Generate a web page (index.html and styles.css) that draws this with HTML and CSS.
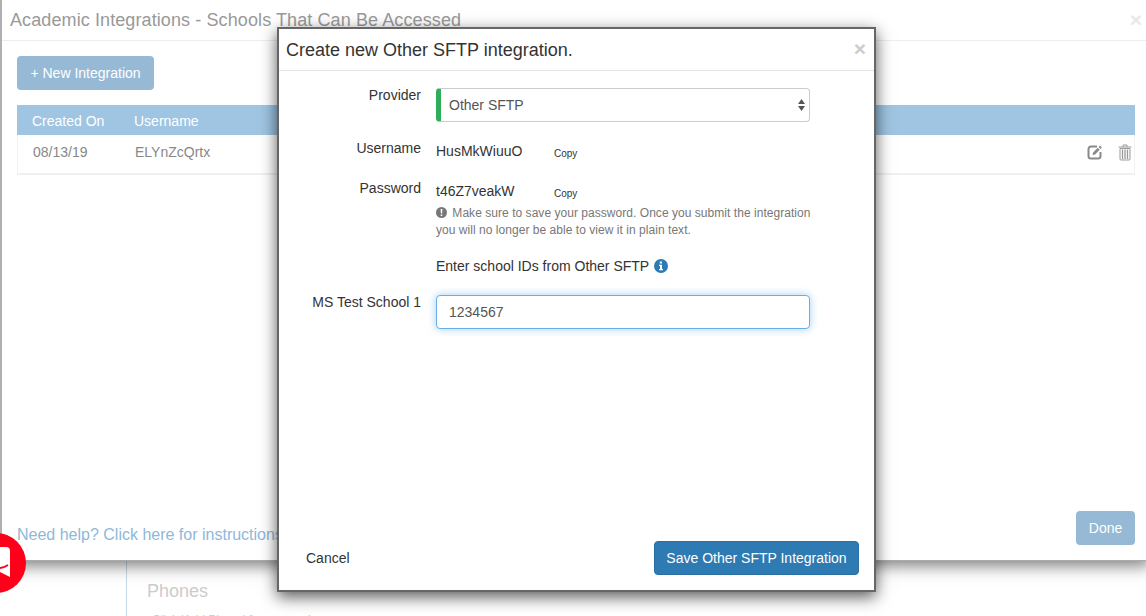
FILE: index.html
```html
<!doctype html>
<html lang="en">
<head>
	<meta charset="UTF-8">
	<title>Academic Integrations</title>
	<link rel="stylesheet" href="styles.css">
</head>
<body>
	<!-- page behind the modals -->
	<div id="page">
		<div class="phones">
			<h3>Phones</h3>
			<p>Click 'Add Phone' for a new phone</p>
		</div>
	</div>

	<!-- first modal -->
	<div id="outer">
		<div class="outer-head">
			<span class="outer-title">Academic Integrations - Schools That Can Be Accessed</span>
			<span class="close outer-close">&times;</span>
		</div>
		<div class="outer-body">
			<button class="btn faded new-btn">+ New Integration</button>
			<div class="table-head">
				<span class="col-date">Created On</span>
				<span>Username</span>
			</div>
			<div class="table-row">
				<span class="col-date">08/13/19</span>
				<span class="col-user">ELYnZcQrtx</span>
				<span class="row-icons">
					<svg width="16" height="16" viewBox="0 0 16 16"><path d="M10 2.500H4A2.500 2.500 0 0 0 1.500 5v7A2.500 2.500 0 0 0 4 14.500h7a2.500 2.500 0 0 0 2.500-2.500V8" fill="none" stroke="#8a8a8a" stroke-width="2"/><path d="M5.500 11l.6-2.600 4.600-4.600 2 2-4.600 4.600zM11.600 2.900 12.900 1.600l2 2-1.300 1.300z" fill="#8a8a8a"/></svg>
					<svg width="14" height="17" viewBox="0 0 14 17"><path d="M0.500 3h13M5 3V1h4v2" fill="none" stroke="#999" stroke-width="1"/><path d="M2 4.500h10V15a1 1 0 0 1-1 1H3a1 1 0 0 1-1-1z" fill="none" stroke="#999" stroke-width="1"/><path d="M4.500 5.500v9.500M7 5.500v9.500M9.500 5.500v9.500" stroke="#999" stroke-width="1.300"/></svg>
				</span>
			</div>
		</div>
		<div class="outer-foot">
			<a class="help">Need help? Click here for instructions</a>
			<button class="btn faded done-btn">Done</button>
		</div>
	</div>

	<!-- chat bubble -->
	<div id="bubble">
		<svg width="26" height="60" viewBox="0 0 26 60"><path d="M-6 14h12a4 4 0 0 1 4 4v26l-10-5h-6z" fill="#fff"/><path d="M-4 35q6 1 12-3" fill="none" stroke="#fe0019" stroke-width="2"/></svg>
	</div>

	<!-- second modal -->
	<div id="dialog">
		<div class="dialog-head">
			<span class="dialog-title">Create new Other SFTP integration.</span>
			<span class="close dialog-close">&times;</span>
		</div>
		<div class="dialog-body">
			<div class="row row-provider">
				<label>Provider</label>
				<div class="select">
					<span>Other SFTP</span>
					<svg width="7" height="12" viewBox="0 0 7 12"><path d="M3.500 0 7 5H0zM3.500 12 0 7h7z" fill="#555"/></svg>
				</div>
			</div>
			<div class="row row-user">
				<label>Username</label>
				<span class="value">HusMkWiuuO</span>
				<a class="copy">Copy</a>
			</div>
			<div class="row row-pass">
				<label>Password</label>
				<span class="value">t46Z7veakW</span>
				<a class="copy">Copy</a>
			</div>
			<p class="note">
				<svg width="11" height="11" viewBox="0 0 11 11"><circle cx="5.500" cy="5.500" r="5.500" fill="#777"/><path d="M4.600 2h1.800l-.3 4.500H4.900zM4.700 7.400h1.600V9H4.700z" fill="#fff"/></svg>
				Make sure to save your password. Once you submit the integration you will no longer be able to view it in plain text.
			</p>
			<div class="enter">
				Enter school IDs from Other SFTP
				<svg width="14" height="14" viewBox="0 0 14 14"><circle cx="7" cy="7" r="7" fill="#2e7ab3"/><path d="M5.800 2.500h2.200v2H5.800zM5 5.800h3v4.200h1v1.300H5V10h1V7.100H5z" fill="#fff"/></svg>
			</div>
			<div class="row row-school">
				<label>MS Test School 1</label>
				<input class="school-input" type="text" value="1234567">
			</div>
		</div>
		<div class="dialog-foot">
			<a class="cancel">Cancel</a>
			<button class="btn save">Save Other SFTP Integration</button>
		</div>
	</div>
</body>
</html>
```

FILE: styles.css
```css
html, body{
	margin: 0;
	height: 100%;
	overflow: hidden;
}
body{
	position: relative;
	background: white;
	font-family: "Liberation Sans", Arial, sans-serif;
	font-size: 14px;
	color: #333;
}
button{
	font-family: inherit;
}

/* page behind */
#page{
	position: absolute;
	top: 561px;
	left: 126px;
	right: 0;
	height: 55px;
	border-left: 1px solid #c5daea;
	padding-left: 20px;
	color: #ccc;
}
.phones h3{
	margin: 20px 0 0;
	font-size: 18px;
	font-weight: normal;
	line-height: 20px;
}
.phones p{
	margin: 12px 0 0;
	padding-left: 5px;
	font-size: 12px;
	line-height: 14px;
}

/* first modal */
#outer{
	position: absolute;
	top: 0;
	left: 0;
	right: -4px;
	height: 561px;
	box-sizing: border-box;
	display: flex;
	flex-direction: column;
	background: white;
	border-left: 2px solid #b0b0b0;
	border-bottom: 1px solid #aaa;
	box-shadow: 0 5px 15px rgba(0,0,0,.5);
}
.outer-head{
	height: 41px;
	box-sizing: border-box;
	padding: 10px 8px 0 8px;
	display: flex;
	justify-content: space-between;
	border-bottom: 1px solid #eee;
}
.outer-title{
	font-size: 18px;
	line-height: 20px;
	letter-spacing: .1px;
	color: #999;
}
.close{
	font-size: 21px;
	font-weight: bold;
	line-height: 20px;
	color: #ccc;
}
.outer-close{
	color: #e8e8e8;
}
.outer-body{
	flex: 1;
	padding: 15px 15px 0;
}
.btn{
	border: 1px solid transparent;
	border-radius: 4px;
	font-size: 14px;
	color: white;
	padding: 0;
	height: 34px;
}
.faded{
	background: #96b9d6;
}
.new-btn{
	display: block;
	width: 137px;
}
.table-head{
	margin-top: 15px;
	height: 30px;
	box-sizing: border-box;
	padding-top: 2px;
	display: flex;
	align-items: center;
	background: #9fc5e2;
	color: white;
}
.col-date{
	width: 102px;
	padding-left: 15px;
}
.table-row{
	height: 40px;
	box-sizing: border-box;
	padding-bottom: 4px;
	display: flex;
	align-items: center;
	color: #888;
	border-left: 1px solid #f2f2f2;
	border-right: 1px solid #f2f2f2;
	border-bottom: 2px solid #f0f0f0;
}
.col-user{
	flex: 1;
}
.row-icons{
	display: flex;
	align-items: center;
	gap: 15px;
	padding-right: 2px;
}
.outer-foot{
	height: 66px;
	box-sizing: border-box;
	padding: 0 15px;
	display: flex;
	align-items: flex-start;
	justify-content: space-between;
	font-size: 16px;
}
.help{
	margin-top: 32px;
	color: #8fb8d8;
}
.done-btn{
	width: 59px;
	margin-top: 17px;
}

/* chat bubble */
#bubble{
	position: absolute;
	left: -34px;
	top: 533px;
	width: 60px;
	height: 60px;
	border-radius: 50%;
	background: #fe0019;
	display: flex;
	justify-content: flex-end;
	overflow: hidden;
}

/* second modal */
#dialog{
	position: absolute;
	top: 27px;
	left: 277px;
	width: 599px;
	height: 565px;
	box-sizing: border-box;
	display: flex;
	flex-direction: column;
	background: white;
	border: 2px solid #666;
	box-shadow: 0 5px 15px rgba(0,0,0,.65);
}
.dialog-head{
	height: 42px;
	box-sizing: border-box;
	padding: 11px 8px 0 7px;
	display: flex;
	justify-content: space-between;
	border-bottom: 1px solid #e5e5e5;
}
.dialog-title{
	font-size: 18px;
	line-height: 20px;
}
.dialog-close{
	margin-top: -1px;
}
.dialog-body{
	flex: 1;
	padding-top: 17px;
}
.row{
	display: flex;
	align-items: flex-start;
}
.row label{
	width: 142px;
	margin-right: 15px;
	text-align: right;
	line-height: 20px;
}
.row-provider label,
.row-school label{
	margin-top: -3px;
}
.select{
	width: 374px;
	height: 34px;
	box-sizing: border-box;
	padding: 0 4px 0 8px;
	display: flex;
	align-items: center;
	justify-content: space-between;
	border: 1px solid #ccc;
	border-left: 5px solid #2fae59;
	border-radius: 4px;
	color: #555;
}
.row-user{
	margin-top: 16px;
}
.row-pass{
	margin-top: 17px;
}
.value{
	width: 118px;
	padding-top: 3px;
	line-height: 20px;
}
.copy{
	padding-top: 9px;
	font-size: 10px;
	line-height: 14px;
}
.note{
	width: 384px;
	margin: 4px 0 0 157px;
	font-size: 12px;
	line-height: 17px;
	letter-spacing: .04px;
	color: #777;
}
.note svg{
	margin-right: 2px;
	vertical-align: -1px;
}
.enter{
	margin: 17px 0 0 157px;
	line-height: 20px;
}
.enter svg{
	margin-left: 1px;
	vertical-align: -2px;
}
.row-school{
	margin-top: 19px;
}
.school-input{
	width: 374px;
	height: 34px;
	box-sizing: border-box;
	padding: 0 12px;
	font-family: inherit;
	font-size: 14px;
	color: #555;
	border: 1px solid #66afe9;
	border-radius: 4px;
	outline: 0;
	box-shadow: 0 0 8px rgba(102,175,233,.6);
}
.dialog-foot{
	height: 50px;
	padding: 0 15px 0 27px;
	display: flex;
	align-items: flex-start;
	justify-content: space-between;
}
.cancel{
	margin-top: 8px;
	line-height: 20px;
}
.save{
	width: 205px;
	margin-top: 1px;
	background: #2e7ab3;
	border-color: #2a6fa3;
}
```
